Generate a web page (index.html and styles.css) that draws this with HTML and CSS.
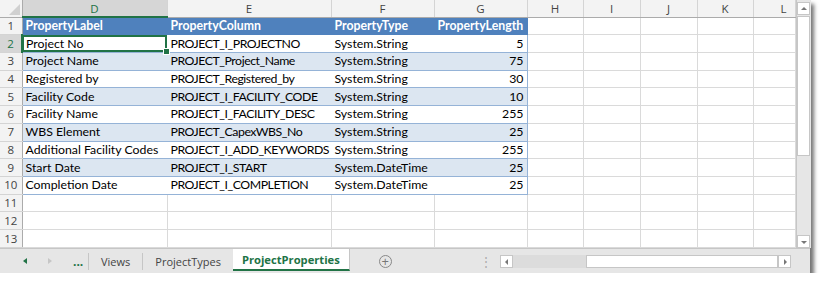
FILE: index.html
```html
<!DOCTYPE html>
<html lang="en">
<head>
  <meta charset="UTF-8" />
  <title>ProjectProperties</title>
  <link rel="stylesheet" href="styles.css">
</head>
<body>
  <div class="window">
    <!-- Grid and vertical scrollbar -->
    <div class="main">
      <table class="sheet">
        <colgroup>
          <col style="width:22px"><col style="width:145px"><col style="width:164px"><col style="width:103px"><col style="width:93px">
          <col style="width:56px"><col style="width:57px"><col style="width:57px"><col style="width:56px"><col style="width:42px">
        </colgroup>
        <thead>
          <tr class="colheads">
            <th class="corner"><span class="tri"></span></th>
            <th class="sel">D</th><th>E</th><th>F</th><th>G</th><th>H</th><th>I</th><th>J</th><th>K</th><th class="last">L</th>
          </tr>
        </thead>
        <tbody id="rows"></tbody>
      </table>
      <div class="vscroll">
        <div class="sbtn up"></div>
        <div class="vthumb"></div>
        <div class="vtrack"></div>
        <div class="sbtn down"></div>
      </div>
    </div>
    <!-- Sheet tabs and horizontal scrollbar -->
    <div class="tabbar">
      <span class="nav prev"></span>
      <span class="nav next"></span>
      <span class="more">...</span>
      <span class="tab">Views</span>
      <span class="tab">ProjectTypes</span>
      <span class="tab active">ProjectProperties</span>
      <span class="addsheet">+</span>
      <span class="split">&#8942;</span>
      <div class="hscroll">
        <div class="sbtn left"></div>
        <div class="htrack"></div>
        <div class="hthumb"></div>
        <div class="sbtn right"></div>
      </div>
    </div>
  </div>

  <script>
    // --- Table data ---
    const data = [
      ["Project No", "PROJECT_I_PROJECTNO", "System.String", 5],
      ["Project Name", "PROJECT_Project_Name", "System.String", 75],
      ["Registered by", "PROJECT_Registered_by", "System.String", 30],
      ["Facility Code", "PROJECT_I_FACILITY_CODE", "System.String", 10],
      ["Facility Name", "PROJECT_I_FACILITY_DESC", "System.String", 255],
      ["WBS Element", "PROJECT_CapexWBS_No", "System.String", 25],
      ["Additional Facility Codes", "PROJECT_I_ADD_KEYWORDS", "System.String", 255],
      ["Start Date", "PROJECT_I_START", "System.DateTime", 25],
      ["Completion Date", "PROJECT_I_COMPLETION", "System.DateTime", 25]
    ];
    const body = document.getElementById("rows");
    let html = '<tr class="hdr"><td class="rh">1</td><td>PropertyLabel</td><td>PropertyColumn</td><td>PropertyType</td><td class="tend">PropertyLength</td><td></td><td></td><td></td><td></td><td></td></tr>';
    data.forEach((r, i) => {
      const n = i + 2;
      const cls = ["t", n % 2 ? "band" : ""].join(" ");
      html += `<tr class="${cls}"><td class="rh${n === 2 ? " sel" : ""}">${n}</td>` +
        `<td${n === 2 ? ' class="active"' : ""}>${r[0]}${n === 2 ? '<span class="handle"></span>' : ""}</td>` +
        `<td class="code">${r[1]}</td><td>${r[2]}</td><td class="num tend">${r[3]}</td>` +
        `<td></td><td></td><td></td><td></td><td></td></tr>`;
    });
    for (let n = 11; n <= 13; n++) {
      html += `<tr><td class="rh">${n}</td><td></td><td></td><td></td><td></td><td></td><td></td><td></td><td></td><td></td></tr>`;
    }
    body.innerHTML = html;
  </script>
</body>
</html>
```

FILE: styles.css
```css
/* Basic reset */
body, html {
  margin: 0;
  padding: 0;
  background: #fff;
}

/* Window frame with drop shadow */
.window {
  width: 810px;
  height: 273px;
  display: flex;
  flex-direction: column;
  background: #e6e6e6;
  box-shadow: 4px 4px 4px rgba(0, 0, 0, 0.55);
}

.main {
  display: flex;
  height: 248px;
  background: #fff;
}

/* Grid */
.sheet {
  border-collapse: collapse;
  table-layout: fixed;
  width: 795px;
  font-family: Lato, sans-serif;
  font-size: 12.3px;
  color: #000;
}
.sheet td {
  height: 17.7px;
  padding: 0 3px;
  border-right: 1px solid #dadada;
  border-bottom: 1px solid #dadada;
  white-space: nowrap;
  overflow: hidden;
  box-sizing: border-box;
  line-height: 16px;
}
.sheet td.code {
  letter-spacing: -0.45px;
}

/* Column and row headers */
.colheads th {
  height: 17px;
  padding: 0;
  background: #f3f3f3;
  border-right: 1px solid #d4d4d4;
  border-bottom: 1px solid #ababab;
  font-family: "Open Sans", sans-serif;
  font-weight: normal;
  font-size: 11.5px;
  color: #444;
  box-sizing: border-box;
}
.colheads th.last {
  text-align: right;
  padding-right: 8px;
}
.colheads th.sel {
  background: #d6d6d6;
  color: #217346;
  border-bottom: 2px solid #217346;
}
.colheads th.corner {
  position: relative;
  border-right: 1px solid #ababab;
}
.tri {
  position: absolute;
  right: 2px;
  bottom: 2px;
  width: 0;
  height: 0;
  border-left: 11px solid transparent;
  border-bottom: 11px solid #d0d0d0;
}
.sheet td.rh {
  padding: 0;
  text-align: center;
  background: #f3f3f3;
  border-right: 1px solid #ababab;
  border-bottom: 1px solid #d4d4d4;
  font-family: "Open Sans", sans-serif;
  font-size: 11.5px;
  color: #444;
}
.sheet td.rh.sel {
  background: #d6d6d6;
  color: #217346;
  border-right: 2px solid #217346;
}

/* Excel table style */
.hdr td:nth-child(-n+5):not(.rh) {
  font-weight: bold;
  color: #fff;
  background: #4f81bd;
  border-bottom-color: #4f81bd;
  border-right: 1px solid #4f81bd;
}
.t td:nth-child(-n+5):not(.rh) {
  border-bottom: 1px solid #95b3d7;
  border-right: 1px solid #fff;
}
.t.band td:nth-child(-n+5):not(.rh) {
  background: #dce6f1;
  border-right-color: #dce6f1;
}
.t td.tend {
  border-right: 1px solid #95b3d7 !important;
}
.num {
  text-align: right;
}

/* Active cell */
.sheet td.active {
  position: relative;
  outline: 2px solid #217346;
  outline-offset: -2px;
  overflow: visible;
}
.handle {
  position: absolute;
  right: -3px;
  bottom: -3px;
  width: 5px;
  height: 5px;
  background: #217346;
  border: 1px solid #fff;
}

/* Vertical scrollbar */
.vscroll {
  width: 15px;
  display: flex;
  flex-direction: column;
  background: #e6e6e6;
  padding: 2px 1px 0 0;
  box-sizing: border-box;
  border-left: 1px solid #c6c6c6;
}
.sbtn {
  width: 13px;
  height: 13px;
  flex: none;
  background: #fff;
  border: 1px solid #c6c6c6;
  box-sizing: border-box;
  position: relative;
}
.sbtn::after {
  content: "";
  position: absolute;
  left: 3px;
  top: 4px;
  border-left: 3px solid transparent;
  border-right: 3px solid transparent;
}
.sbtn.up::after { border-bottom: 3px solid #777; }
.sbtn.down::after { border-top: 3px solid #777; top: 5px; }
.sbtn.left::after {
  left: 4px; top: 3px;
  border: 0;
  border-top: 3px solid transparent;
  border-bottom: 3px solid transparent;
  border-right: 3px solid #777;
}
.sbtn.right::after {
  left: 5px; top: 3px;
  border: 0;
  border-top: 3px solid transparent;
  border-bottom: 3px solid transparent;
  border-left: 3px solid #777;
}
.vthumb {
  width: 13px;
  height: 140px;
  margin-top: 1px;
  background: #fff;
  border: 1px solid #c6c6c6;
  box-sizing: border-box;
}
.vtrack {
  flex: 1;
}

/* Sheet tabs */
.tabbar {
  height: 25px;
  display: flex;
  align-items: center;
  border-top: 1px solid #c6c6c6;
  box-sizing: border-box;
  font-family: "Open Sans", sans-serif;
  font-size: 11px;
  color: #444;
}
.nav {
  width: 0;
  height: 0;
  border-top: 3px solid transparent;
  border-bottom: 3px solid transparent;
}
.nav.prev {
  margin-left: 23px;
  border-right: 4px solid #217346;
}
.nav.next {
  margin-left: 21px;
  border-left: 4px solid #c6c6c6;
}
.more {
  margin-left: 21px;
  width: 15px;
  color: #217346;
  font-weight: bold;
  font-size: 12px;
  border-right: 1px solid #c6c6c6;
  line-height: 17px;
}
.tab {
  padding: 0 12px;
  line-height: 17px;
  border-right: 1px solid #c6c6c6;
}
.tab.active {
  align-self: stretch;
  display: flex;
  align-items: center;
  background: #fff;
  color: #217346;
  font-weight: bold;
  font-size: 11.2px;
  padding: 0 9px;
  margin-left: -1px;
  border-right: 1px solid #c6c6c6;
  border-bottom: 2px solid #217346;
  box-sizing: border-box;
  margin-bottom: 2px;
}
.addsheet {
  margin-left: 29px;
  width: 11px;
  height: 11px;
  border: 1px solid #888;
  border-radius: 50%;
  color: #777;
  font-size: 13px;
  line-height: 11px;
  text-align: center;
}
.split {
  margin-left: 88px;
  color: #aaa;
  font-size: 12px;
}
.hscroll {
  margin-left: 8px;
  display: flex;
  align-items: center;
  height: 13px;
}
.htrack {
  width: 73px;
  height: 13px;
  background: #dcdcdc;
}
.hthumb {
  width: 192px;
  height: 13px;
  background: #fff;
  border: 1px solid #c6c6c6;
  box-sizing: border-box;
}
```
